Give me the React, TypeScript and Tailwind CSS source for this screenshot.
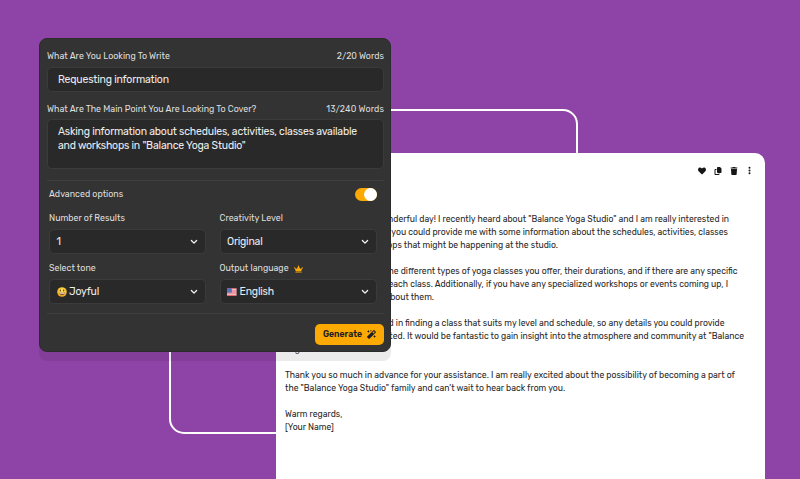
import React from "react";
import { FaHeart, FaCrown, FaMagic } from "react-icons/fa";
import { FaCopy, FaTrash, FaEllipsisVertical } from "react-icons/fa6";

function Chevron() {
  return (
    <svg viewBox="0 0 8 6" className="h-[6px] w-[8px]" fill="none" stroke="#f4f4f4" strokeWidth="1.3" strokeLinecap="round" strokeLinejoin="round">
      <path d="M1.4 1.5 4 4.1 6.6 1.5" />
    </svg>
  );
}

function Smile() {
  return (
    <svg viewBox="0 0 20 20" className="mr-[2.5px] h-[10px] w-[10px]">
      <defs>
        <radialGradient id="face" cx="50%" cy="35%" r="65%">
          <stop offset="0" stopColor="#ffe65a" />
          <stop offset="1" stopColor="#f2a51d" />
        </radialGradient>
      </defs>
      <circle cx="10" cy="10" r="9.6" fill="url(#face)" />
      <ellipse cx="6.8" cy="7" rx="1.3" ry="2.1" fill="#6b4518" />
      <ellipse cx="13.2" cy="7" rx="1.3" ry="2.1" fill="#6b4518" />
      <path d="M4 11h12c0 7-12 7-12 0Z" fill="#8a5520" />
      <path d="M4.8 11.2h10.4v2H4.8z" fill="#fff" />
    </svg>
  );
}

function Flag() {
  return (
    <svg viewBox="0 0 18 14" className="mr-[3px] h-[8px] w-[9.5px]">
      <rect width="18" height="14" rx="1" fill="#f5dfe2" />
      <path d="M0 1h18M0 5h18M0 9h18M0 13h18" stroke="#e2515c" strokeWidth="2" />
      <rect width="9" height="8" fill="#4568b4" />
      <path d="M1 2h7M1 4h7M1 6h7" stroke="#a9bce4" strokeWidth=".7" strokeDasharray="1 1" />
    </svg>
  );
}

function Select({ label, badge, children }: { label: string; badge?: React.ReactNode; children: React.ReactNode }) {
  return (
    <div className="w-[157px]">
      <div className="flex h-[14px] items-center gap-[5px] text-[8.85px] text-[#dedede]">
        <span>{label}</span>
        {badge}
      </div>
      <div className="mt-[3px] flex h-[25px] items-center justify-between rounded-[5px] border border-[#3b3b3b] bg-[#292929] pr-[7px] pl-[6.5px] text-[10.5px] tracking-[-0.2px] text-[#ececec]">
        <span className="flex items-center">{children}</span>
        <Chevron />
      </div>
    </div>
  );
}

const lines: { text: string; style: string }[] = [
  { text: "Hope you're having a wonderful day! I recently heard about \"Balance Yoga Studio\" and I am really interested in", style: "w-[444px] justify-end" },
  { text: "joining. I was hoping that you could provide me with some information about the schedules, activities, classes", style: "w-[443px] justify-end" },
  { text: "available and workshops that might be happening at the studio.", style: "w-[273px] justify-end" },
  { text: "", style: "" },
  { text: "I'd love to know the different types of yoga classes you offer, their durations, and if there are any specific", style: "w-[452.5px] justify-end" },
  { text: "requirements for each class. Additionally, if you have any specialized workshops or events coming up, I", style: "w-[443px] justify-end" },
  { text: "would love to hear about them.", style: "w-[149px] justify-end" },
  { text: "", style: "" },
  { text: "I am very interested in finding a class that suits my level and schedule, so any details you could provide", style: "w-[439.5px] justify-end" },
  { text: "would be appreciated. It would be fantastic to gain insight into the atmosphere and community at \"Balance", style: "w-[459px] justify-end" },
  { text: "Yoga Studio\".", style: "" },
  { text: "", style: "" },
  { text: "Thank you so much in advance for your assistance. I am really excited about the possibility of becoming a part of", style: "tracking-[0.01px]" },
  { text: "the \"Balance Yoga Studio\" family and can't wait to hear back from you.", style: "tracking-[0.01px]" },
  { text: "", style: "" },
  { text: "Warm regards,", style: "" },
  { text: "[Your Name]", style: "" },
];

export default function App() {
  return (
    <div className="relative h-[479px] w-[800px] overflow-hidden bg-[#8e44a6] font-['Rubik','Roboto',sans-serif]">
      <div className="absolute top-[109px] left-[169px] h-[325px] w-[409px] rounded-[15px] border-2 border-white" />

      <article className="absolute top-[153px] left-[276px] h-[340px] w-[489px] rounded-[10px] bg-white">
        <div className="flex h-[35px] items-center justify-end gap-[8px] pr-[12px] text-[#161616]">
          <FaHeart className="h-[8px] w-[8px]" />
          <FaCopy className="h-[8px] w-[8px]" />
          <FaTrash className="h-[8px] w-[8px]" />
          <FaEllipsisVertical className="h-[9px] w-[7px]" />
        </div>
        <div className="mt-[25px] ml-[9px] text-[8.65px] leading-[13px] text-[#272727]">
          {lines.map((line, i) => (
            <div key={i} className="h-[13px] whitespace-nowrap">
              <div className={"flex " + line.style}>
                <span>{line.text}</span>
              </div>
            </div>
          ))}
        </div>
      </article>

      <div className="absolute top-[340px] left-[39px] h-[21px] w-[352px] rounded-b-[8px] bg-black/8" />

      <section className="absolute top-[38px] left-[39px] h-[314px] w-[352px] rounded-[8px] border border-[#2b2b2b] bg-[#333333] pt-[12px] pr-[6px] pl-[7px] text-[#dedede]">
        <div className="flex h-[12px] items-center justify-between text-[8.85px]">
          <span>What Are You Looking To Write</span>
          <span>2/20 Words</span>
        </div>
        <div className="mt-[4px] flex h-[25px] items-center rounded-[5px] border border-[#3b3b3b] bg-[#292929] pl-[10px] text-[10.5px] tracking-[-0.2px] text-[#ececec]">Requesting information</div>
        <div className="mt-[11px] flex h-[14px] items-center justify-between text-[8.85px]">
          <span>What Are The Main Point You Are Looking To Cover?</span>
          <span className="tracking-[0.1px]">13/240 Words</span>
        </div>
        <div className="mt-[2px] h-[50px] rounded-[5px] border border-[#3b3b3b] bg-[#292929] pt-[5px] pl-[10px] text-[10.5px] leading-[14px] tracking-[-0.2px] whitespace-nowrap text-[#ececec]">
          <div>Asking information about schedules, activities, classes available</div>
          <div>and workshops in "Balance Yoga Studio"</div>
        </div>
        <hr className="mt-[11px] border-[#3e3e3e]" />
        <div className="mt-[7px] flex h-[14px] items-center justify-between pr-[7px] pl-[2px] text-[8.85px]">
          <span>Advanced options</span>
          <div className="-mt-px flex h-[13px] w-[22px] items-center justify-end rounded-full bg-[#fca903]">
            <div className="h-[13px] w-[13px] rounded-full bg-white" />
          </div>
        </div>
        <div className="mt-[10px] grid grid-cols-[157px_157px] gap-x-[13.5px] gap-y-[8px] pl-[2px]">
          <Select label="Number of Results">1</Select>
          <Select label="Creativity Level">Original</Select>
          <Select label="Select tone"><Smile />Joyful</Select>
          <Select label="Output language" badge={<FaCrown className="h-[8px] w-[9px] text-[#fca903]" />}><Flag />English</Select>
        </div>
        <hr className="mt-[9px] border-[#3e3e3e]" />
        <div className="mt-[10px] flex justify-end">
          <button className="flex h-[21px] w-[69px] items-center justify-center gap-[5px] rounded-[5px] bg-[#fca903] text-[8.65px] font-semibold text-[#1d1c22]">
            Generate
            <FaMagic className="h-[9px] w-[9px]" />
          </button>
        </div>
      </section>
    </div>
  );
}
